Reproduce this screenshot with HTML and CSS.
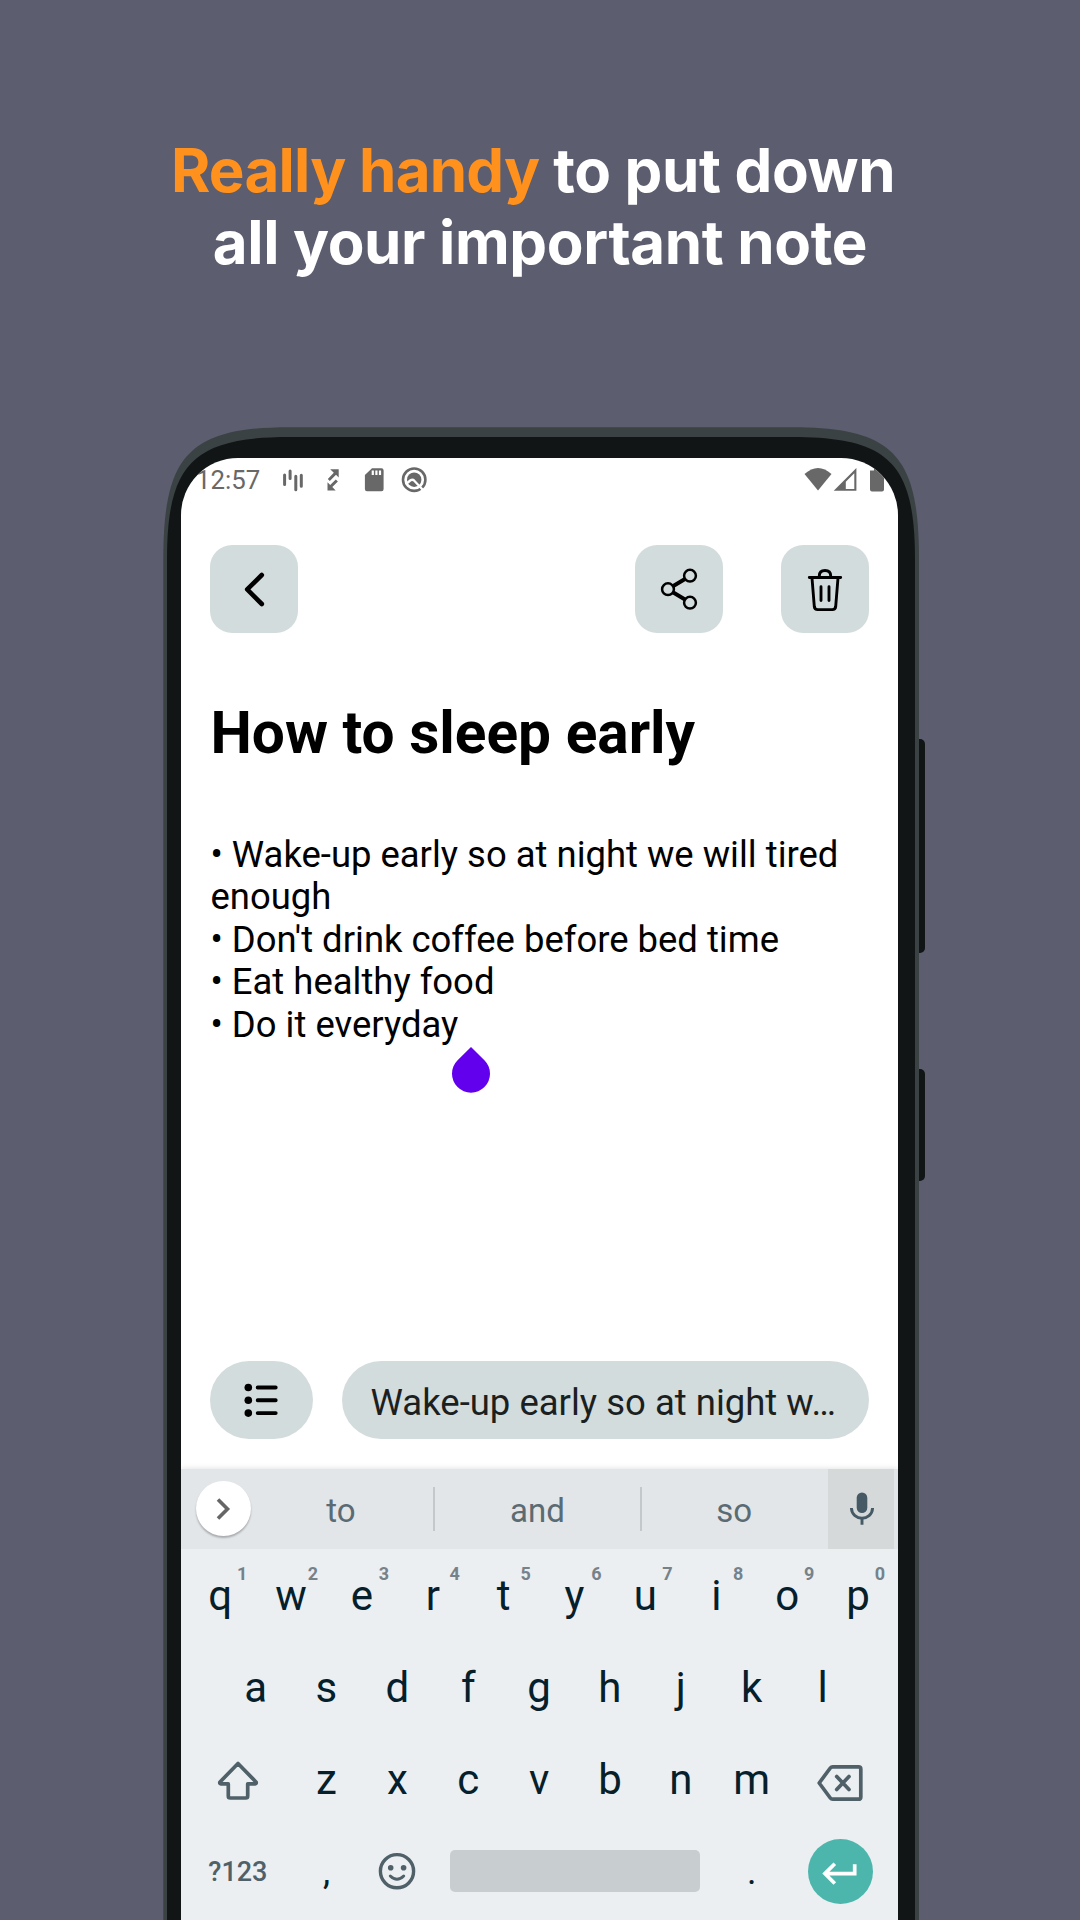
FILE: index.html
```html
<!DOCTYPE html>
<html lang="en">
<head>
<meta charset="utf-8">
<title>Notes</title>
<link rel="stylesheet" href="styles.css">
</head>
<body>
<main class="promo">
  <h1 class="headline"><span class="accent">Really handy</span> to put down&nbsp;<br>all your important note</h1>

  <div class="phone">
    <svg class="frame" width="760" height="1493" viewBox="163 427 760 1493" aria-hidden="true">
      <rect x="912" y="739" width="13" height="214" rx="5" fill="#111516"/>
      <rect x="912" y="1069" width="13" height="112" rx="5" fill="#111516"/>
      <path fill="#3b4244" d="M163.3 1930V560C163.3 457 187 427.2 290 427.2H792.3C895.3 427.2 919 457 919 560V1930Z"/>
      <path fill="#111516" d="M167 1930V560C167 463 193 437 290 437H792C889 437 915 463 915 560V1930Z"/>
    </svg>

    <div class="screen">
      <div class="status">
        <span class="clock">12:57</span>
        <div class="status-icons">
          <svg width="28" height="28" viewBox="0 0 28 28" stroke="currentColor" stroke-width="3" stroke-linecap="round" fill="none"><path d="M5.6 9v9.5M11.1 5v7.500M16.8 10.200v13.500M22.300 9.200v11"/></svg>
          <svg width="28" height="28" viewBox="0 0 28 28" fill="currentColor"><path d="M11.200 3.200H19.700V11.500L17 8.800 10.800 15 8.800 12.900 14.800 6.800Z"/><path d="M8.500 16.200 11.200 18.900 16.800 13.400 18.900 15.500 13.300 21 16.700 24.500H8.500Z"/></svg>
          <svg width="28" height="28" viewBox="0 0 28 28"><path fill="currentColor" d="M12 2.300H21.500Q23.600 2.300 23.600 4.400V23Q23.600 25.200 21.500 25.200H7Q4.900 25.200 4.900 23V9Z"/><path stroke="#fff" stroke-width="2.200" d="M12.800 4.500v4.500M16.400 4.500v4.500M20 4.500v4.500"/></svg>
          <svg width="28" height="28" viewBox="0 0 28 28" fill="none" stroke="currentColor" stroke-width="2.600"><circle cx="14.200" cy="13.700" r="11.200"/><circle cx="14.200" cy="13.700" r="7.200" fill="currentColor" stroke="none"/><path stroke="#fff" stroke-width="2.300" d="M6 18 10.500 14.300Q12.500 13 14.300 14.700L23 24"/></svg>
        </div>
        <div class="signal-icons">
          <svg width="28" height="28" viewBox="0 0 28 28" fill="currentColor"><path d="M0.500 8Q14-4 27.500 8L14 24.500Z"/></svg>
          <svg width="28" height="28" viewBox="0 0 28 28"><path fill="currentColor" fill-rule="evenodd" d="M1.700 24.800 24.400 2V24.800ZM13.800 23H22.300V7.300L13.800 15.700Z"/></svg>
          <svg class="battery" width="28" height="28" viewBox="0 0 28 28" fill="currentColor"><path d="M7 4.500H11V2H17V4.500H21V23.500Q21 25.500 19 25.500H9Q7 25.500 7 23.500Z"/></svg>
        </div>
      </div>

      <div class="toolbar">
        <button class="tool" aria-label="Back"><svg width="88" height="88" viewBox="0 0 88 88" fill="none" stroke="#000" stroke-width="4.600" stroke-linecap="round" stroke-linejoin="round"><path d="M51.800 30 37.200 44.400 51.800 59"/></svg></button>
        <button class="tool share" aria-label="Share"><svg width="88" height="88" viewBox="0 0 88 88" fill="none" stroke="#000" stroke-width="2.500"><path stroke-width="3.900" d="M38.300 41 50 34M38.300 47.500 50 54.500"/><circle cx="33" cy="44.200" r="5.900"/><circle cx="55" cy="30.700" r="5.900"/><circle cx="55" cy="57.700" r="5.900"/></svg></button>
        <button class="tool" aria-label="Delete"><svg width="88" height="88" viewBox="0 0 88 88" fill="none" stroke="#000" stroke-width="2.900" stroke-linecap="round" stroke-linejoin="round"><path d="M28.300 32.500H59.700M38.300 32V31Q38.300 25.500 44 25.500T49.700 31V32M31 33 33.300 61.500Q33.700 64.600 36.700 64.600H51.300Q54.300 64.600 54.700 61.500L57 33M40 41.800V55.500M48 41.800V55.500"/></svg></button>
      </div>

      <h2 class="note-title">How to sleep early</h2>
      <div class="note-body">• Wake-up early so at night we will tired<br>enough<br>• Don't drink coffee before bed time<br>• Eat healthy food<br>• Do it everyday<svg class="cursor" width="40" height="47" viewBox="0 0 40 47"><path fill="#6200ee" d="M20 1 33.400 14.200A19 19 0 1 1 6.600 14.200Z"/></svg></div>

      <div class="compose">
        <button class="list-button" aria-label="List"><svg width="102" height="78" viewBox="0 0 102 78" stroke="#000" stroke-width="3.900" stroke-linecap="round"><g stroke="none"><circle cx="38.300" cy="26.500" r="3.800"/><circle cx="38.300" cy="39.300" r="3.800"/><circle cx="38.300" cy="52.100" r="3.800"/></g><path d="M47.700 26.500H65.700M47.700 39.300H65.700M47.700 52.100H65.700"/></svg></button>
        <div class="preview">Wake-up early so at night w…</div>
      </div>

      <div class="keyboard">
        <div class="strip">
          <span class="expand"><svg width="55" height="55" viewBox="0 0 55 55" fill="none" stroke="#666" stroke-width="3.600"><path d="M22 18.500 31.500 28 22 37.500"/></svg></span>
          <span class="word">to</span>
          <span class="word middle">and</span>
          <span class="word last">so</span>
          <span class="mic"><svg width="66" height="80" viewBox="0 0 66 80"><rect x="28.700" y="23.400" width="10.600" height="20.600" rx="5.300" fill="#455a64"/><path fill="none" stroke="#455a64" stroke-width="2.900" d="M23.400 39C24 52.600 44 52.600 44.600 39M34 49V55.800" /></svg></span>
        </div>
        <div class="keys">
          <span class="key">q<sup>1</sup></span><span class="key">w<sup>2</sup></span><span class="key">e<sup>3</sup></span><span class="key">r<sup>4</sup></span><span class="key">t<sup>5</sup></span><span class="key">y<sup>6</sup></span><span class="key">u<sup>7</sup></span><span class="key">i<sup>8</sup></span><span class="key">o<sup>9</sup></span><span class="key">p<sup>0</sup></span>
          <span class="key indent">a</span><span class="key">s</span><span class="key">d</span><span class="key">f</span><span class="key">g</span><span class="key">h</span><span class="key">j</span><span class="key">k</span><span class="key">l</span>
          <span class="key wide row-start"><svg width="44" height="44" viewBox="0 0 44 44" fill="none" stroke="#4f6068" stroke-width="3.700" stroke-linejoin="round"><path d="M22 4.500 3.800 23.200Q3.500 24.700 5 24.900H12.300V37Q12.300 39 14.300 39H29.700Q31.700 39 31.700 37V24.900H39Q40.500 24.700 40.200 23.200Z"/></svg></span><span class="key">z</span><span class="key">x</span><span class="key">c</span><span class="key">v</span><span class="key">b</span><span class="key">n</span><span class="key">m</span><span class="key wide backspace"><svg width="48" height="44" viewBox="0 0 48 44" fill="none" stroke="#4f6068" stroke-width="3.700" stroke-linejoin="round" stroke-linecap="round"><path d="M3.200 23 14.300 8Q15.200 6.800 16.700 6.800H42.500Q44.800 6.800 44.800 9.100V36.900Q44.800 39.200 42.500 39.200H16.700Q15.200 39.200 14.300 38Z"/><path d="M20.700 16.500 33 29.500M33 16.500 20.700 29.500"/></svg></span>
          <span class="key wide mode">?123</span><span class="key small">,</span><span class="key"><svg width="40" height="40" viewBox="0 0 40 40"><circle cx="20" cy="19.200" r="16.600" fill="none" stroke="#4f6068" stroke-width="3.400"/><circle cx="13.700" cy="15.800" r="2.800" fill="#4f6068"/><circle cx="26.600" cy="15.800" r="2.800" fill="#4f6068"/><path d="M13.300 24Q20 30.500 26.700 24" fill="none" stroke="#4f6068" stroke-width="3" stroke-linecap="round"/></svg></span><span class="key spacebar"><i></i></span><span class="key small">.</span><span class="key wide"><span class="enter"><svg width="65" height="65" viewBox="0 0 65 65" fill="none" stroke="#fff" stroke-width="3.700"><path d="M46.700 25.300V34.600H17M26.800 24.700 16.900 34.600 26.800 44.500"/></svg></span></span>
        </div>
      </div>
    </div>
  </div>
</main>
</body>
</html>
```
FILE: styles.css
```css
* { box-sizing: border-box; }

body { margin: 0; }

svg { display: block; flex: none; }

button { border: 0; padding: 0; font: inherit; }

.promo {
  width: 1080px;
  height: 1920px;
  overflow: hidden;
  background: #5c5d6f;
  display: flex;
  flex-direction: column;
  align-items: center;
  padding-top: 134px;
  font-family: Roboto, "Liberation Sans", sans-serif;
}

.headline {
  margin: 0;
  font: 700 60px/72px Inter, "Liberation Sans", sans-serif;
  letter-spacing: -.36px;
  color: #fff;
  text-align: center;
  white-space: nowrap;
}

.accent { color: #ff911c; letter-spacing: -.74px; }

.phone {
  position: relative;
  width: 754px;
  height: 1493px;
  margin-top: 149px;
  padding: 31px 0 0 18px;
}

.frame { position: absolute; left: 0; top: 0; overflow: visible; }

.screen {
  position: relative;
  width: 717px;
  height: 1462px;
  background: #fff;
  border-radius: 57px 57px 0 0;
  overflow: hidden;
  display: flex;
  flex-direction: column;
}

.status {
  display: flex;
  height: 87px;
  padding: 8px 0 0 15px;
  color: #686868;
}

.clock { width: 83px; font-size: 25.8px; line-height: 29px; }

.status-icons { display: flex; gap: 12.4px; }

.signal-icons { display: flex; margin-left: auto; padding-right: 7.5px; }

.battery { margin-left: 3px; }

.toolbar { display: flex; padding: 0 29px; height: 154px; }

.tool {
  width: 88px;
  height: 88px;
  border-radius: 22px;
  background: #d3dcdc;
}

.share { margin-left: auto; margin-right: 58px; }

.note-title {
  margin: 0 29.5px;
  height: 135px;
  font-size: 58.6px;
  line-height: 68px;
  font-weight: 700;
  color: #000;
}

.note-body {
  margin: 0 29.5px;
  height: 527px;
  font-size: 36.45px;
  line-height: 42.4px;
  color: #000;
  white-space: nowrap;
}

.cursor { position: absolute; left: 270px; top: 588px; }

.compose { display: flex; gap: 29px; padding: 0 29px; height: 108px; }

.list-button {
  width: 102.5px;
  height: 78px;
  border-radius: 39px;
  background: #d3dcdc;
}

.preview {
  flex: 1;
  height: 78px;
  border-radius: 39px;
  padding: 3px 0 0 29px;
  background: #d3dcdc;
  color: #1c1f1f;
  font-size: 36.5px;
  line-height: 78px;
  white-space: nowrap;
}

.keyboard {
  flex: 1;
  background: #ebeff2;
  box-shadow: 0 -1px 5px rgba(0, 0, 0, .1);
}

.strip {
  display: flex;
  align-items: center;
  height: 80px;
  padding: 0 4px 0 15px;
  background: #e2e6e9;
}

.expand {
  width: 55px;
  height: 55px;
  margin: 0 -2px 1px 0;
  border-radius: 50%;
  background: #fff;
  box-shadow: 0 2px 2px rgba(0, 0, 0, .25);
}

.word {
  flex: 1;
  padding-top: 3px;
  text-align: center;
  font-size: 33px;
  line-height: 41px;
  color: #5b6b73;
}

.middle {
  flex: none;
  width: 209.5px;
  border: 2px solid #c3c8cb;
  border-width: 0 2px;
}

.last { padding-right: 2px; }

.mic { background: #d5d9da; }

.keys {
  display: grid;
  grid-template-columns: repeat(20, 35.45px);
  grid-auto-rows: 92.2px;
  padding: 0 3.7px;
  color: #06202b;
  font-size: 42px;
}

.key {
  position: relative;
  grid-column: span 2;
  display: flex;
  justify-content: center;
  align-items: center;
}

.key sup {
  position: absolute;
  left: 52.3px;
  top: 14px;
  font-size: 18px;
  line-height: 22px;
  font-weight: 700;
  color: #76828a;
}

.indent { grid-column: 2 / span 2; }

.wide { grid-column: span 3; }

.wide.row-start { grid-column: 1 / span 3; padding-top: 4px; }

.backspace { padding: 6px 1px 0 0; }

.mode { font-size: 27px; font-weight: 500; color: #4f6068; }

.small { font-size: 36px; }

.spacebar { grid-column: span 8; }

.spacebar i {
  width: 250px;
  height: 42px;
  margin-bottom: 2px;
  border-radius: 5px;
  background: #c8cdd0;
}

.enter {
  width: 65px;
  height: 65px;
  margin-bottom: 1px;
  border-radius: 50%;
  background: #4db6ac;
}
```
